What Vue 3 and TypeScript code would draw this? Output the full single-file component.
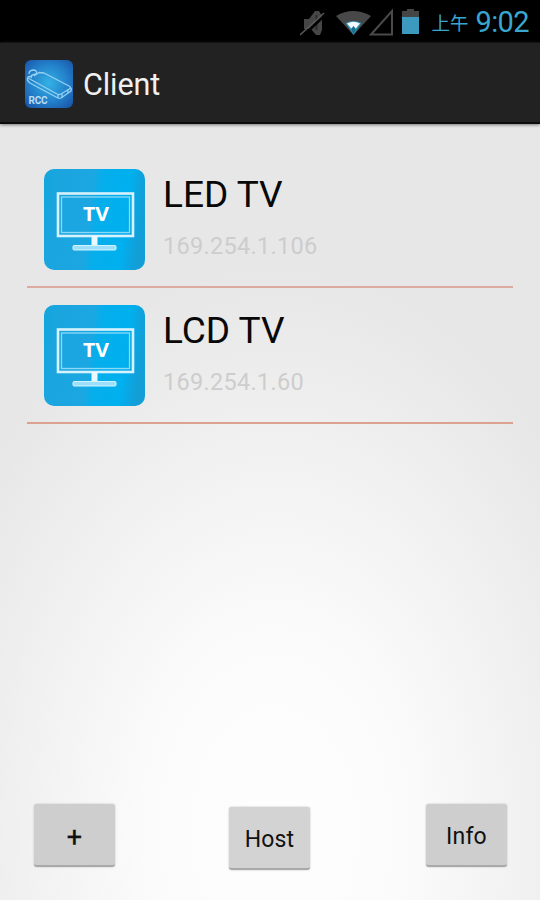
<script setup lang="ts">
interface Device {
  name: string
  address: string
}

const devices: Device[] = [
  { name: 'LED TV', address: '169.254.1.106' },
  { name: 'LCD TV', address: '169.254.1.60' },
]
</script>

<template>
  <div class="screen">
    <div class="status">
      <svg class="status-icons" width="124" height="32" viewBox="0 0 124 32">
        <path d="M4 13h5l6-8h4l3 5v14l-2 5h-4l-5-6H4z" fill="#464646" />
        <path d="M16.500 9v15" stroke="#2c2c2c" stroke-width="2" />
        <path d="M2 31 26 8" stroke="#000" stroke-width="2.500" />
        <path d="M0 29 24 7" stroke="#5a5a5a" stroke-width="1.500" />
        <path d="M36 10Q53 0 71 10L53.5 29z" fill="#484848" />
        <path d="M45.500 17Q53.500 13 61.500 17L53.500 29z" fill="#2d91b6" />
        <path d="M47 17.500Q53.500 14 60 17.500L57 21 53.500 26 50 21z" fill="#f3fbff" />
        <path d="m53.500 20 2.500 3-2.500 5-2.500-5z" fill="#176f91" />
        <path d="M71 28.500 92 5V28.500Z" fill="none" stroke="#4a4a4a" stroke-width="2" />
        <path d="M102 5h5V3h7v2h5v7h-17z" fill="#454545" />
        <path d="M102 11h17v17h-17z" fill="#3b9abe" />
      </svg>
      <span class="meridiem">上午</span>
      <span class="clock">9:02</span>
    </div>
    <header class="bar">
      <svg class="logo" width="48" height="48" viewBox="0 0 48 48">
        <defs>
          <radialGradient id="logo-fill" cx="50%" cy="48%" r="65%">
            <stop offset="0" stop-color="#33b2e5" />
            <stop offset=".6" stop-color="#2380ca" />
            <stop offset="1" stop-color="#1a59aa" />
          </radialGradient>
        </defs>
        <rect width="48" height="48" rx="6" fill="url(#logo-fill)" />
        <g fill="none" stroke="#94d0f2" stroke-width="1.300" stroke-linejoin="round">
          <path d="M9 16 14 12.500 19 13 44 26Q47 28 46 31L36 38Q34 39 31 37L5 23Q1 20 3 17L7 16" />
          <path d="m3 18 29 16q2 1 4 0l10-6M33 34v4M37 33v5M43 29v4" />
          <path d="M4 14q0-4 5-4 4 1 2 4l-4 1-1 3" />
        </g>
        <text x="3.500" y="44" class="logo-text" textLength="19">RCC</text>
      </svg>
      <h1 class="title">Client</h1>
    </header>
    <main class="content">
      <ul class="list">
        <li v-for="device in devices" :key="device.address" class="row">
          <svg class="tv" width="101" height="101" viewBox="0 0 101 101">
            <defs>
              <linearGradient id="tv-fill" x1="0" y1="0" x2="1" y2=".12">
                <stop offset="0" stop-color="#13a6dd" />
                <stop offset=".15" stop-color="#1ba5df" />
                <stop offset=".5" stop-color="#1ba7e2" />
                <stop offset=".57" stop-color="#06aeeb" />
                <stop offset=".85" stop-color="#00b0ef" />
                <stop offset="1" stop-color="#129fd8" />
              </linearGradient>
            </defs>
            <rect width="101" height="101" rx="10" fill="url(#tv-fill)" />
            <rect x="14" y="24.500" width="75" height="42.500" fill="none" stroke="#d8f2fd" stroke-width="2.600" />
            <rect x="17.500" y="28" width="68" height="35.500" fill="none" stroke="#8dd9f7" stroke-width="1.300" />
            <path d="M47.500 67h6v10h-6z" fill="#e9f9ff" />
            <rect x="29" y="76.500" width="43" height="4.500" rx="1" fill="#9cdffa" stroke="#d4f3ff" />
            <text x="52" y="52" class="tv-text" text-anchor="middle" textLength="26" lengthAdjust="spacingAndGlyphs">TV</text>
          </svg>
          <div class="details">
            <div class="name">{{ device.name }}</div>
            <div class="address">{{ device.address }}</div>
          </div>
        </li>
      </ul>
      <footer class="actions">
        <button class="action plus" type="button">+</button>
        <button class="action host" type="button">Host</button>
        <button class="action" type="button">Info</button>
      </footer>
    </main>
  </div>
</template>

<style>
body {
  margin: 0;
}
</style>

<style scoped>
.screen {
  width: 540px;
  height: 900px;
  display: flex;
  flex-direction: column;
  overflow: hidden;
  font-family: Roboto, "Noto Sans CJK TC", sans-serif;
  background: #e8e8e8;
}
.status {
  height: 43px;
  flex: none;
  box-sizing: border-box;
  padding: 0 11px 0 0;
  display: flex;
  align-items: center;
  justify-content: flex-end;
  background: #000;
  color: #39a6cf;
}
.status-icons {
  margin: 1px 7px 0 0;
}
.meridiem {
  font-size: 18.5px;
  line-height: 30px;
  margin: 5px 7px 0 0;
}
.clock {
  margin-top: 1px;
  font-size: 29px;
  line-height: 43px;
  letter-spacing: -0.6px;
}
.bar {
  height: 81px;
  flex: none;
  box-sizing: border-box;
  padding: 0 0 0 25px;
  display: flex;
  align-items: center;
  background: #222;
  border-bottom: 2px solid #0c0c0c;
  box-shadow: 0 1px 3px #777;
  position: relative;
}
.logo {
  margin-top: 3px;
}
.logo-text {
  font: 700 10px Roboto, sans-serif;
  fill: #b9ddf5;
}
.title {
  margin: 5px 0 0 10px;
  font-size: 30.5px;
  line-height: 36px;
  font-weight: 400;
  letter-spacing: -0.1px;
  color: #f0f0f0;
}
.content {
  flex: 1;
  display: flex;
  flex-direction: column;
  justify-content: space-between;
  padding: 28px 27px 30px;
  background: radial-gradient(ellipse 370px 560px at 51% 91%, #fefefe 0%, #fbfbfb 35%, #f2f2f2 65%, #e7e7e7 100%);
}
.list {
  list-style: none;
  margin: 0;
  padding: 0;
}
.row {
  height: 136px;
  box-sizing: border-box;
  display: flex;
  padding: 16px 0 0 17px;
  border-bottom: 2px solid #dcaaa1;
}
.row:last-child {
  border-bottom-color: #dba291;
}
.tv {
  margin-top: 0.5px;
}
.details {
  margin-left: 18px;
}
.name {
  margin-top: 5px;
  font-size: 37px;
  line-height: 44px;
  color: #080808;
}
.address {
  margin-top: 15px;
  font-size: 23.5px;
  line-height: 28px;
  letter-spacing: 0.3px;
  color: #cdcdcd;
}
.tv-text {
  font: 700 19px "Open Sans", sans-serif;
  fill: #fff;
}
.actions {
  display: flex;
  justify-content: space-between;
  padding: 0 6px 0 7px;
}
.action {
  width: 81px;
  height: 63px;
  box-sizing: border-box;
  margin: 0 0 3px;
  padding: 4px 0 0;
  border: 0;
  border-bottom: 2px solid #a9a9a9;
  border-radius: 3px;
  background: #cecece;
  box-shadow: 0 0 2px #bbb;
  font: 400 23px Roboto, sans-serif;
  letter-spacing: 0.2px;
  color: #111;
}
.host {
  margin: 3px 2px 0 0;
  background: #d3d3d3;
}
.plus {
  font-size: 27px;
  -webkit-text-stroke: 0.3px #111;
}
</style>
